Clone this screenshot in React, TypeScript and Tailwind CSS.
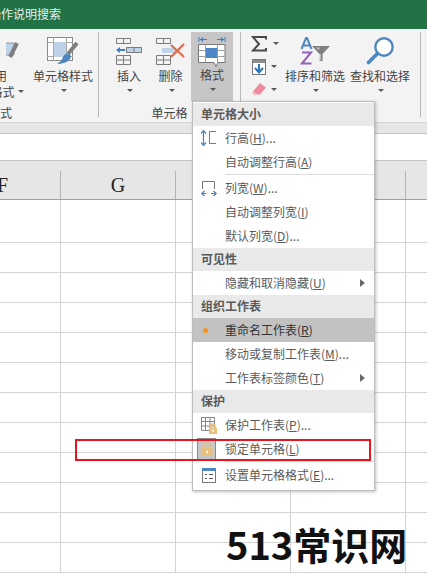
import React from "react";

function Arrow() {
  return <span className="inline-block w-0 h-0 border-x-[3px] border-t-[3px] border-x-transparent border-t-[#5a5a5a]" />;
}

function CellStyleIcon() {
  return (
    <svg width="32" height="28" viewBox="0 0 32 28" fill="none">
      <rect x="0.5" y="0.5" width="25" height="23" fill="#fff" stroke="#8a8a8a" />
      <path d="M0 5.5h26M0 19.5h26M6.5 0v24M19.5 0v24" stroke="#a8a8a8" />
      <rect x="7" y="5" width="12" height="15" fill="#bfd3e8" />
      <path d="M30 6l-9 11" stroke="#7f7f7f" strokeWidth="4" />
      <path d="M19 17c3-1 5 1 5 3-2 5-8 7-14 7 3-2 5-4 6-7 1-2 2-3 3-3z" fill="#4e86c2" />
    </svg>
  );
}

function InsertIcon() {
  return (
    <svg width="28" height="28" viewBox="0 0 28 28" fill="none" stroke="#7c7c7c">
      <path d="M1.5 1.5h14v5h-14zM8.5 1.5v5" />
      <path d="M11.5 10.5h15v5h-15zM19 10.5v5" />
      <rect x="12" y="11" width="14" height="4" fill="#bfd3e8" stroke="none" />
      <path d="M11.5 10.5h15v5h-15zM19 10.5v5" />
      <path d="M3 13h7" stroke="#3f7fc0" strokeWidth="2" />
      <path d="M1 13l4-3v6z" fill="#3f7fc0" stroke="none" />
      <path d="M1.5 18.5h14v9h-14zM8.5 18.5v9M1.5 23h14" />
    </svg>
  );
}

function DeleteIcon() {
  return (
    <svg width="31" height="28" viewBox="0 0 31 28" fill="none" stroke="#7c7c7c">
      <path d="M1.5 1.5h14v5h-14zM8.5 1.5v5" />
      <rect x="7" y="11" width="14" height="5" fill="#bfd3e8" stroke="none" />
      <path d="M1.5 18.5h14v9h-14zM8.5 18.5v9M1.5 23h14" />
      <path d="M16 8l13 12M29 7L16 20" stroke="#dd6b4d" strokeWidth="2.2" />
    </svg>
  );
}

function FormatIcon() {
  return (
    <svg width="28" height="31" viewBox="0 0 28 31" fill="none">
      <path d="M1 1v5M27 1v5" stroke="#3f7fc0" />
      <path d="M2 3.5h7M26 3.5h-7" stroke="#3f7fc0" />
      <path d="M2 3.5l3-2.5v5zM26 3.5l-3-2.5v5z" fill="#3f7fc0" />
      <path d="M0.5 8.5h26.5v18h-7l-2 4-2-4H0.5z" fill="#fff" stroke="#777" />
      <path d="M7.5 8.5v18M19.5 8.5v18M0.5 14.5h26M0.5 20.5h26" stroke="#9c9c9c" />
      <rect x="8" y="12" width="11" height="10" fill="#4d86c6" />
    </svg>
  );
}

function SigmaIcon() {
  return (
    <svg width="16" height="16" viewBox="0 0 16 16" fill="none">
      <path d="M15 3.5V1H2l6 7-6 6.5h13V12" stroke="#4a4a4a" strokeWidth="2" />
    </svg>
  );
}

function FillIcon() {
  return (
    <svg width="15" height="16" viewBox="0 0 15 16" fill="none">
      <rect x="0.5" y="0.5" width="13" height="15" fill="#fff" stroke="#777" />
      <rect x="1" y="1" width="12" height="3" fill="#8e8e8e" />
      <path d="M7 5v7" stroke="#2e75b6" strokeWidth="2" />
      <path d="M3 9l4 4.5L11 9" stroke="#2e75b6" strokeWidth="2" />
    </svg>
  );
}

function EraserIcon() {
  return (
    <svg width="14" height="13" viewBox="0 0 14 13">
      <path d="M8 0l6 4.5-6 7H5L1 8.5z" fill="#ec8c9c" />
      <path d="M1 8.5l4 3.5H2L0 10z" fill="#f3b6c0" />
    </svg>
  );
}

function SortIcon() {
  return (
    <svg width="31" height="28" viewBox="0 0 31 28" fill="none">
      <path d="M1.5 12L6 1h1l4.5 11M3.3 8.5h6.5" stroke="#4e86c2" strokeWidth="2" />
      <path d="M2 15.5h9L2 26.5h9.5" stroke="#9463bd" strokeWidth="2" />
      <path d="M12 9h18l-7.5 8v7h-3v-7z" fill="#7f7f7f" />
      <path d="M15.5 10.5h5l-2 2.5z" fill="#bdbdbd" />
      <path d="M20 17v6" stroke="#fff" />
    </svg>
  );
}

function FindIcon() {
  return (
    <svg width="29" height="28" viewBox="0 0 29 28" fill="none">
      <circle cx="18" cy="10" r="8.7" fill="#fff" stroke="#4e86c2" strokeWidth="2.4" />
      <path d="M11.5 16.5L2.5 25.5" stroke="#4e86c2" strokeWidth="3.6" strokeLinecap="round" />
    </svg>
  );
}

function RowHeightIcon() {
  return (
    <svg width="16" height="16" viewBox="0 0 16 16" fill="none">
      <path d="M2.5 2v12" stroke="#4a7fb5" strokeWidth="1.2" />
      <path d="M0 3.5L2.5 0.5 5 3.5M0 12.5l2.5 3 2.5-3" stroke="#4a7fb5" strokeWidth="1.2" />
      <path d="M15 1.5H8.5v12H15" stroke="#777" />
    </svg>
  );
}

function ColWidthIcon() {
  return (
    <svg width="16" height="15" viewBox="0 0 16 15" fill="none">
      <path d="M1.5 8V0.5h12V8" stroke="#777" />
      <path d="M1 12.5h4M10 12.5h5" stroke="#4a7fb5" strokeWidth="1.2" />
      <path d="M3.5 10L0.8 12.5 3.5 15M12.5 10l2.7 2.5-2.7 2.5" stroke="#4a7fb5" strokeWidth="1.2" />
    </svg>
  );
}

function Lock({ size = 12 }: { size?: number }) {
  return (
    <svg width={size} height={size * 1.15} viewBox="0 0 12 14" fill="none">
      <path d="M3 7V4a3 3 0 016 0v3" stroke="#e8c07a" strokeWidth="1.6" />
      <rect x="0.5" y="6" width="11" height="8" fill="#e8c07a" />
      <rect x="5" y="8.5" width="2" height="3" fill="#fff" opacity="0.7" />
    </svg>
  );
}

function ProtectIcon() {
  return (
    <svg width="17" height="17" viewBox="0 0 17 17" fill="none">
      <path d="M0.5 0.5h13v13h-13zM4.5 0.5v13M9 0.5v13M0.5 4.5h13M0.5 9h13" stroke="#858585" />
      <path d="M9 11V9.5a2.5 2.5 0 015 0V11" stroke="#e8c07a" strokeWidth="1.4" />
      <rect x="8" y="10.5" width="8" height="6.5" fill="#e8c07a" />
      <rect x="11.3" y="12.5" width="1.5" height="2.5" fill="#fff" />
    </svg>
  );
}

function FormatCellsIcon() {
  return (
    <svg width="14" height="15" viewBox="0 0 14 15" fill="none">
      <rect x="0.5" y="0.5" width="13" height="14" fill="#fff" stroke="#777" />
      <rect x="0" y="0" width="14" height="3" fill="#4e86c2" />
      <path d="M3 6.5h2M7 6.5h4" stroke="#555" />
      <path d="M3 10.5h2M7 10.5h4" stroke="#555" />
    </svg>
  );
}

function RibbonButton({ label, icon, w }: { label: string; icon: React.ReactNode; w: string }) {
  return (
    <div className={`${w} shrink-0 h-[69px] flex flex-col items-center pt-[5px]`}>
      <div className="h-[31px] flex items-start justify-center">{icon}</div>
      <div className="h-[16px] leading-[16px] whitespace-nowrap">{label}</div>
      <div className="mt-[5px] ml-[2px] flex">
        <Arrow />
      </div>
    </div>
  );
}

function MenuHeader({ children }: { children: React.ReactNode }) {
  return <div className="h-[23px] leading-[22px] bg-[#e9e9e9] pl-[8px] font-bold text-[#5a5a5a]">{children}</div>;
}

function MenuRow({
  children,
  icon,
  sub,
  active,
}: {
  children: React.ReactNode;
  icon?: React.ReactNode;
  sub?: boolean;
  active?: boolean;
}) {
  return (
    <div className={`h-[24px] flex items-center ${active ? "bg-[#c2c2c2] text-[#333]" : ""}`}>
      <div className="w-[32px] h-[24px] flex items-center justify-center shrink-0">{icon}</div>
      <div className="flex-1 whitespace-nowrap">{children}</div>
      {sub && <span className="mr-[9px] w-0 h-0 border-y-[4px] border-l-[5px] border-y-transparent border-l-[#6a6a6a]" />}
    </div>
  );
}

function Sep() {
  return <div className="ml-[32px] h-px bg-[#dcdcdc]" />;
}

const rows = Array.from({ length: 12 }, (_, i) => i);

export default function App() {
  return (
    <div className="relative w-[427px] h-[575px] overflow-hidden bg-white text-[12px] text-[#444] font-['Noto_Sans_CJK_SC',sans-serif]">
      <div className="h-[29px] bg-[#217346] text-[#e8f0ea] leading-[27px] -ml-[11px]">操作说明搜索</div>

      <div className="h-[94px] bg-[#f3f3f3] border-b border-[#d4d4d4] pt-[3px] flex">
        <div className="-ml-[38px] w-[137px] h-[85px] shrink-0 flex flex-col border-r border-[#b8b8b8]">
          <div className="flex h-[69px] shrink-0">
            <div className="w-[66px] shrink-0 flex flex-col items-center pt-[5px]">
              <div className="h-[31px] flex items-start justify-end w-[50px] overflow-hidden">
                <svg width="14" height="28" viewBox="0 0 14 28" fill="none">
                  <path d="M0 6h8v12H0" fill="#bfd3e8" stroke="#999" />
                  <path d="M11 6l-7 14" stroke="#7f7f7f" strokeWidth="4" />
                </svg>
              </div>
              <div className="h-[16px] leading-[16px]">套用</div>
              <div className="h-[15px] leading-[15px] whitespace-nowrap flex items-center gap-[3px]">
                表格格式
                <Arrow />
              </div>
            </div>
            <div className="w-[5px] shrink-0" />
            <RibbonButton w="w-[60px]" label="单元格样式" icon={<CellStyleIcon />} />
          </div>
          <div className="h-[16px] leading-[16px] mt-[4px] shrink-0 text-right pr-[86px]">样式</div>
        </div>

        <div className="w-[142px] h-[85px] shrink-0 flex flex-col border-r border-[#b8b8b8]">
          <div className="flex h-[69px] shrink-0 pl-[9px]">
            <RibbonButton w="w-[42px]" label="插入" icon={<InsertIcon />} />
            <RibbonButton w="w-[41px]" label="删除" icon={<DeleteIcon />} />
            <div className="bg-[#c6c6c6]">
              <div className="-mt-px">
                <RibbonButton w="w-[42px]" label="格式" icon={<FormatIcon />} />
              </div>
            </div>
          </div>
          <div className="h-[16px] leading-[16px] mt-[4px] shrink-0 text-center">单元格</div>
        </div>

        <div className="w-[180px] h-[85px] shrink-0 flex border-r border-[#b8b8b8]">
          <div className="w-[44px] shrink-0 flex flex-col pl-[10px]">
            <div className="h-[23px] flex items-center">
              <SigmaIcon />
              <span className="ml-[6px] flex">
                <Arrow />
              </span>
            </div>
            <div className="h-[23px] flex items-center pl-px">
              <FillIcon />
              <span className="ml-[4px] flex">
                <Arrow />
              </span>
            </div>
            <div className="h-[23px] flex items-center pl-px">
              <EraserIcon />
              <span className="ml-[5px] flex">
                <Arrow />
              </span>
            </div>
          </div>
          <RibbonButton w="w-[60px]" label="排序和筛选" icon={<SortIcon />} />
          <div className="w-[5px] shrink-0" />
          <RibbonButton w="w-[60px]" label="查找和选择" icon={<FindIcon />} />
        </div>
      </div>

      <div className="h-[10px] bg-[#e6e6e6] border-b border-[#c6c6c6] box-content" />
      <div className="h-[27px] bg-white border-b border-[#c6c6c6]" />

      <div className="h-[39px] bg-[#e6e6e6] border-b border-[#9f9f9f] flex font-['Liberation_Serif',serif] text-[20px] text-[#222]">
        {[
          { t: "F", w: "w-[61px]", pad: "-ml-[55px]" },
          { t: "G", w: "w-[115px]", pad: "" },
          { t: "", w: "w-[115px]", pad: "" },
          { t: "", w: "w-[115px]", pad: "" },
        ].map((c, i) => (
          <div key={i} className={`${c.w} shrink-0 flex items-end`}>
            <div className="flex-1 h-[28px] leading-[28px] text-center border-r border-[#b4b4b4] relative">
              <span className={i === 0 ? "block w-[115px] -ml-[55px]" : ""}>{c.t}</span>
            </div>
          </div>
        ))}
      </div>

      <div className="flex flex-col">
        {rows.map((r) => (
          <div key={r} className={`${r === 0 ? "h-[43px]" : "h-[30px]"} flex border-b border-[#d4d4d4]`}>
            <div className="w-[61px] border-r border-[#d4d4d4]" />
            <div className="w-[115px] border-r border-[#d4d4d4]" />
            <div className="w-[115px] border-r border-[#d4d4d4]" />
            <div className="w-[115px] border-r border-[#d4d4d4]" />
          </div>
        ))}
      </div>

      <div className="absolute left-[192px] top-[101px] w-[183px] h-[390px] bg-white border border-[#bdbdbd] py-px shadow-[1px_1px_3px_rgba(0,0,0,0.25)] text-[#5a5a5a]">
        <MenuHeader>单元格大小</MenuHeader>
        <MenuRow icon={<RowHeightIcon />}>
          行高(<u>H</u>)...
        </MenuRow>
        <MenuRow>
          自动调整行高(<u>A</u>)
        </MenuRow>
        <Sep />
        <div className="h-px" />
        <MenuRow icon={<ColWidthIcon />}>
          列宽(<u>W</u>)...
        </MenuRow>
        <MenuRow>
          自动调整列宽(<u>I</u>)
        </MenuRow>
        <MenuRow>
          默认列宽(<u>D</u>)...
        </MenuRow>
        <MenuHeader>可见性</MenuHeader>
        <MenuRow sub>
          隐藏和取消隐藏(<u>U</u>)
        </MenuRow>
        <MenuHeader>组织工作表</MenuHeader>
        <MenuRow active icon={<span className="w-[5px] h-[5px] rounded-full bg-[#f7941d] -ml-[8px]" />}>
          重命名工作表(<u>R</u>)
        </MenuRow>
        <MenuRow>
          移动或复制工作表(<u>M</u>)...
        </MenuRow>
        <MenuRow sub>
          工作表标签颜色(<u>T</u>)
        </MenuRow>
        <MenuHeader>保护</MenuHeader>
        <MenuRow icon={<ProtectIcon />}>
          保护工作表(<u>P</u>)...
        </MenuRow>
        <MenuRow
          icon={
            <span className="w-[19px] h-[22px] bg-[#c6c6c6] border border-[#8a8a8a] flex items-center justify-center -ml-[5px]">
              <Lock />
            </span>
          }
        >
          锁定单元格(<u>L</u>)
        </MenuRow>
        <Sep />
        <div className="h-px" />
        <MenuRow icon={<FormatCellsIcon />}>
          设置单元格格式(<u>E</u>)...
        </MenuRow>
      </div>

      <div className="absolute left-[75px] top-[439px] w-[296px] h-[22px] border-2 border-[#e8141f]" />

      <div className="absolute left-[226px] top-[516px] text-[38px] leading-[56px] font-bold text-[#111] whitespace-nowrap">
        513常识网
      </div>
    </div>
  );
}
